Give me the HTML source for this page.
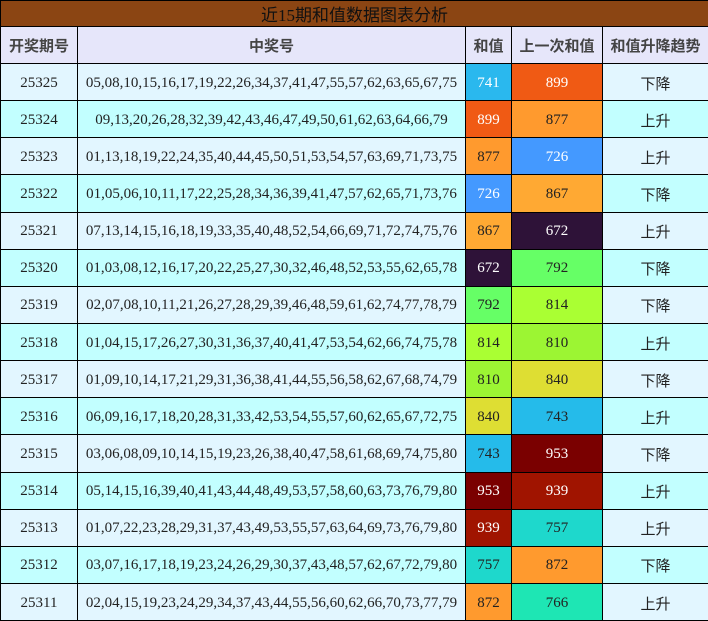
<!DOCTYPE html>
<html><head><meta charset="utf-8"><style>
body{margin:0;background:#fff;}
.t{position:absolute;left:0;top:0;width:708px;border-collapse:collapse;table-layout:fixed;font-family:"Liberation Serif","Noto Serif CJK SC",serif;font-size:15px;color:#222;}
.t td,.t th{border:1.5px solid #000;text-align:center;padding:0;overflow:hidden;white-space:nowrap;}
.ti{background:#8b4513;height:25px;font-size:17px;font-weight:normal;color:#111;font-family:"Liberation Serif","Noto Sans CJK SC",serif;}
.hd th{background:#e6e6fa;height:36px;font-family:"Liberation Sans","Noto Sans CJK SC",sans-serif;font-size:15px;font-weight:bold;color:#444;}
tr.r td{height:34.15px;padding-top:2px;}
tr.a td{background:#e2f6ff}
tr.b td{background:#c2ffff}
.w{color:#fff}
.z{font-family:"Liberation Sans","Noto Sans CJK SC",sans-serif;font-size:15px;}
</style></head><body>
<table class="t">
<colgroup><col style="width:77px"><col style="width:388px"><col style="width:46px"><col style="width:91px"><col style="width:106px"></colgroup>
<tr><th colspan="5" class="ti">近15期和值数据图表分析</th></tr>
<tr class="hd"><th>开奖期号</th><th>中奖号</th><th>和值</th><th>上一次和值</th><th>和值升降趋势</th></tr>
<tr class="r a"><td>25325</td><td>05,08,10,15,16,17,19,22,26,34,37,41,47,55,57,62,63,65,67,75</td><td class="w" style="background:#2ab8ee!important">741</td><td class="w" style="background:#f05a14!important">899</td><td class="z">下降</td></tr>
<tr class="r b"><td>25324</td><td>09,13,20,26,28,32,39,42,43,46,47,49,50,61,62,63,64,66,79</td><td class="w" style="background:#f05a14!important">899</td><td style="background:#ff9a2e!important">877</td><td class="z">上升</td></tr>
<tr class="r a"><td>25323</td><td>01,13,18,19,22,24,35,40,44,45,50,51,53,54,57,63,69,71,73,75</td><td style="background:#ff9a2e!important">877</td><td class="w" style="background:#4499ff!important">726</td><td class="z">上升</td></tr>
<tr class="r b"><td>25322</td><td>01,05,06,10,11,17,22,25,28,34,36,39,41,47,57,62,65,71,73,76</td><td class="w" style="background:#4499ff!important">726</td><td style="background:#ffa933!important">867</td><td class="z">下降</td></tr>
<tr class="r a"><td>25321</td><td>07,13,14,15,16,18,19,33,35,40,48,52,54,66,69,71,72,74,75,76</td><td style="background:#ffa933!important">867</td><td class="w" style="background:#2e1238!important">672</td><td class="z">上升</td></tr>
<tr class="r b"><td>25320</td><td>01,03,08,12,16,17,20,22,25,27,30,32,46,48,52,53,55,62,65,78</td><td class="w" style="background:#2e1238!important">672</td><td style="background:#66ff66!important">792</td><td class="z">下降</td></tr>
<tr class="r a"><td>25319</td><td>02,07,08,10,11,21,26,27,28,29,39,46,48,59,61,62,74,77,78,79</td><td style="background:#66ff66!important">792</td><td style="background:#aaff33!important">814</td><td class="z">下降</td></tr>
<tr class="r b"><td>25318</td><td>01,04,15,17,26,27,30,31,36,37,40,41,47,53,54,62,66,74,75,78</td><td style="background:#aaff33!important">814</td><td style="background:#9cf533!important">810</td><td class="z">上升</td></tr>
<tr class="r a"><td>25317</td><td>01,09,10,14,17,21,29,31,36,38,41,44,55,56,58,62,67,68,74,79</td><td style="background:#9cf533!important">810</td><td style="background:#dede33!important">840</td><td class="z">下降</td></tr>
<tr class="r b"><td>25316</td><td>06,09,16,17,18,20,28,31,33,42,53,54,55,57,60,62,65,67,72,75</td><td style="background:#dede33!important">840</td><td style="background:#25bbea!important">743</td><td class="z">上升</td></tr>
<tr class="r a"><td>25315</td><td>03,06,08,09,10,14,15,19,23,26,38,40,47,58,61,68,69,74,75,80</td><td style="background:#25bbea!important">743</td><td class="w" style="background:#7a0000!important">953</td><td class="z">下降</td></tr>
<tr class="r b"><td>25314</td><td>05,14,15,16,39,40,41,43,44,48,49,53,57,58,60,63,73,76,79,80</td><td class="w" style="background:#7a0000!important">953</td><td class="w" style="background:#a01400!important">939</td><td class="z">上升</td></tr>
<tr class="r a"><td>25313</td><td>01,07,22,23,28,29,31,37,43,49,53,55,57,63,64,69,73,76,79,80</td><td class="w" style="background:#a01400!important">939</td><td style="background:#1ed8cc!important">757</td><td class="z">上升</td></tr>
<tr class="r b"><td>25312</td><td>03,07,16,17,18,19,23,24,26,29,30,37,43,48,57,62,67,72,79,80</td><td style="background:#1ed8cc!important">757</td><td style="background:#ff9a2e!important">872</td><td class="z">下降</td></tr>
<tr class="r a"><td>25311</td><td>02,04,15,19,23,24,29,34,37,43,44,55,56,60,62,66,70,73,77,79</td><td style="background:#ff9a2e!important">872</td><td style="background:#1ee6b4!important">766</td><td class="z">上升</td></tr>
</table>
</body></html>
